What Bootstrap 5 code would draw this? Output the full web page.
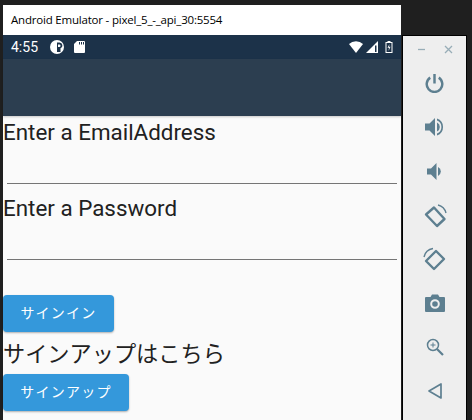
<!DOCTYPE html>
<html lang="en">
<head>
<meta charset="UTF-8">
<title>Android Emulator</title>
<link rel="stylesheet" href="https://cdn.jsdelivr.net/npm/bootstrap@5.3.0/dist/css/bootstrap.min.css">
<style>
body { width: 472px; height: 420px; overflow: hidden; background: #1f1f1f; font-family: Roboto, "Noto Sans CJK JP", sans-serif; }
.emu-main { width: 398px; margin-left: 3px; padding-top: 5px; height: 420px; }
.emu-title { height: 30px; background: #fff; color: #000; font: 11.5px/30px "Open Sans", sans-serif; padding-left: 8px; letter-spacing: -.2px; }
.emu-status { height: 24px; background: #1c3249; color: #fff; font-size: 14px; padding: 0 8px; }
.emu-status-p { margin-left: 12px; }
.emu-status-sd { margin-left: 10px; }
.emu-status-signal { margin-left: 3px; }
.emu-status-batt { margin-left: 7px; }
.emu-appbar { position: relative; height: 57px; background: #2c3e50; box-shadow: 0 1px 2px rgba(0,0,0,.2); }
.emu-body { height: 304px; padding-top: 3px; background: #fafafa; color: #212121; }
.emu-label { font-size: 22.4px; line-height: 26px; height: 26px; }
.emu-line { height: 1px; background: #757575; margin: 38px 4px 11px; }
.emu-line-b { margin-bottom: 35px; }
.emu-btn { background: #3498db; color: #fff; border: 0; border-radius: 4px; height: 37px; font-size: 14px; letter-spacing: 1.25px; box-shadow: 0 1px 2px rgba(0,0,0,.3); padding: 0; display: block; }
.emu-in { width: 111px; margin-bottom: 8px; }
.emu-reg { width: 126px; margin-top: 8px; }
.emu-jp { font-size: 22.2px; line-height: 28px; }
.emu-side { width: 63px; height: 384px; margin: 36px 0 0 2px; background: #eee; box-shadow: 0 0 0 1px #000; color: #5d7f90; }
.emu-side svg { display: block; }
.emu-winbtns { height: 25px; padding-top: 9px; gap: 18px; color: #98adb7; }
.emu-tool { height: 44px; }
</style>
</head>
<body>
<div class="d-flex">
  <div class="emu-main">
    <div class="emu-title">Android Emulator - pixel_5_-_api_30:5554</div>
    <div class="emu-status d-flex align-items-center">
      <span>4:55</span>
      <svg class="emu-status-p" width="14" height="14" viewBox="0 0 14 14"><circle cx="7" cy="7" r="7" fill="#fff"/><path d="M7 2.500h2.500a3 3 0 0 1 1 5.800V12H7z" fill="#1c3249"/><path d="M8 4.500h1.300a1.200 1.200 0 0 1 0 2.400H8z" fill="#fff"/></svg>
      <svg class="emu-status-sd" width="11" height="12" viewBox="0 0 11 12"><path d="M3 0h7a1 1 0 0 1 1 1v10a1 1 0 0 1-1 1H1a1 1 0 0 1-1-1V3z" fill="#fff"/><path d="M5 1h1v2.500H5zM7 1h1v2.500H7zM9 1h1v2.500H9z" fill="#1c3249"/></svg>
      <svg class="ms-auto" width="14" height="12" viewBox="0 0 14 12"><path d="M0 3a10 10 0 0 1 14 0L7 12z" fill="#fff"/></svg>
      <svg class="emu-status-signal" width="12" height="12" viewBox="0 0 12 12"><path d="M0 12 12 0v12z" fill="#fff"/><path d="M9 4.500h1.500V11H9z" fill="#1c3249"/></svg>
      <svg class="emu-status-batt" width="8" height="12" viewBox="0 0 8 12"><path d="M2.500 0h3v1H7.500v11H.5V1h2z" fill="#fff"/><path d="M1.500 2h5v9h-5z" fill="#1c3249"/><path d="M4.500 3 2.500 6.800H4L3.500 10 5.500 5.800H4z" fill="#fff"/></svg>
    </div>
    <div class="emu-appbar"></div>
    <div class="emu-body">
      <div class="emu-label">Enter a EmailAddress</div>
      <div class="emu-line"></div>
      <div class="emu-label">Enter a Password</div>
      <div class="emu-line emu-line-b"></div>
      <button class="emu-btn emu-in" type="button">サインイン</button>
      <div class="emu-label emu-jp">サインアップはこちら</div>
      <button class="emu-btn emu-reg" type="button">サインアップ</button>
    </div>
  </div>
  <div class="emu-side">
    <div class="emu-winbtns d-flex align-items-start justify-content-center">
      <svg width="9" height="9" viewBox="0 0 9 9"><path d="M1 4.500h7" stroke="currentColor" stroke-width="1.300"/></svg>
      <svg width="9" height="9" viewBox="0 0 9 9"><path d="M1 1l7 7M8 1 1 8" stroke="currentColor" stroke-width="1.300"/></svg>
    </div>
    <div class="emu-tool d-flex align-items-center justify-content-center">
      <svg width="19" height="19" viewBox="0 0 20 20" fill="none" stroke="currentColor" stroke-width="2.600"><path d="M10 0v10"/><path d="M5.500 3.800a8.200 8.200 0 1 0 9 0"/></svg>
    </div>
    <div class="emu-tool d-flex align-items-center justify-content-center">
      <svg width="20" height="20" viewBox="0 0 20 20" fill="currentColor"><path d="M0 6.500h4.500L10 1v18l-5.500-5.500H0z"/><path d="M12 5.500a5 5 0 0 1 0 9z"/><path d="M12 1.500a9 9 0 0 1 0 17v-2a7 7 0 0 0 0-13z"/></svg>
    </div>
    <div class="emu-tool d-flex align-items-center justify-content-center">
      <svg width="15" height="17" viewBox="0 0 15 17" fill="currentColor"><path d="M0 5.500h4L9.500 0v17L4 11.500H0z"/><path d="M11 4a5 5 0 0 1 0 9z"/></svg>
    </div>
    <div class="emu-tool d-flex align-items-center justify-content-center">
      <svg width="24" height="25" viewBox="0 0 24 25" fill="none" stroke="currentColor"><path d="M11 4.500 21.500 16 14 23 3 11.500z" stroke-width="2.400" stroke-linejoin="round"/><path d="M15 2a11 11 0 0 1 8 8" stroke-width="1.400"/></svg>
    </div>
    <div class="emu-tool d-flex align-items-center justify-content-center">
      <svg width="24" height="25" viewBox="0 0 24 25" fill="none" stroke="currentColor"><path d="M13 4 21 12 11 22 3 14z" stroke-width="2.400" stroke-linejoin="round"/><path d="M1 10a11 11 0 0 1 9-8.500" stroke-width="1.400"/></svg>
    </div>
    <div class="emu-tool d-flex align-items-center justify-content-center">
      <svg width="20" height="18" viewBox="0 0 20 18"><path d="M1 3h4.500L7 .5h6L14.500 3H19a1 1 0 0 1 1 1v13a1 1 0 0 1-1 1H1a1 1 0 0 1-1-1V4a1 1 0 0 1 1-1z" fill="currentColor"/><circle cx="10" cy="10" r="3.800" fill="none" stroke="#eee" stroke-width="2"/></svg>
    </div>
    <div class="emu-tool d-flex align-items-center justify-content-center">
      <svg width="18" height="18" viewBox="0 0 18 18" fill="none" stroke="currentColor"><circle cx="7" cy="7" r="5.500" stroke-width="1.500"/><path d="M11 11l6 6" stroke-width="2.200"/><path d="M7 4.500v5M4.500 7h5" stroke-width="1"/></svg>
    </div>
    <div class="emu-tool d-flex align-items-center justify-content-center">
      <svg width="14" height="16" viewBox="0 0 14 16" fill="none" stroke="currentColor" stroke-width="1.700"><path d="M13 1v14L1 8z" stroke-linejoin="round"/></svg>
    </div>
  </div>
</div>
</body>
</html>
